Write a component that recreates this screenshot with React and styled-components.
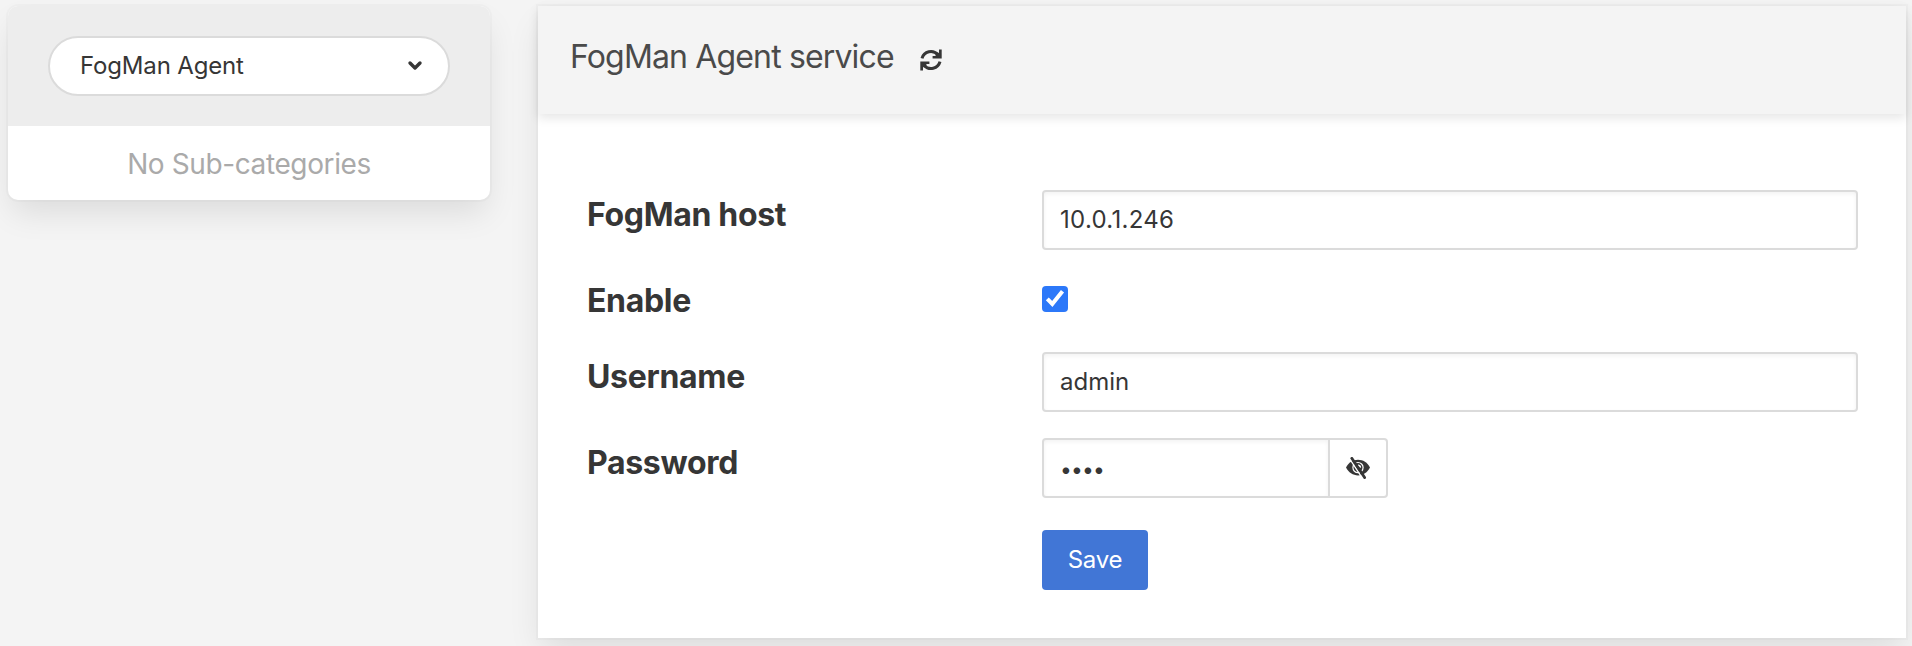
import React from 'react';
import styled, { createGlobalStyle } from 'styled-components';

const GlobalStyle = createGlobalStyle`
  *, *::before, *::after { box-sizing: border-box; }
  body {
    margin: 0;
    background: #f4f4f4;
    color: #363636;
    font-family: Inter, 'Liberation Sans', sans-serif;
    font-size: 24px;
    overflow: hidden;
  }
`;

const Page = styled.div`
  display: flex;
  align-items: flex-start;
  gap: 48px;
  height: 646px;
  padding: 6px 6px 0 8px;
  overflow: hidden;
`;

const Card = styled.section`
  background: #fff;
  box-shadow: 0 16px 32px -4px rgba(10, 10, 10, 0.1), 0 0 0 2px rgba(10, 10, 10, 0.02);
`;

const Sidebar = styled(Card)`
  width: 482px;
  height: 194px;
  border-radius: 10px;
  overflow: hidden;
`;

const SidebarHeader = styled.div`
  height: 120px;
  padding: 30px 40px;
  background: #ededed;
`;

const CategorySelect = styled.div`
  display: flex;
  align-items: center;
  justify-content: space-between;
  height: 60px;
  padding: 0 25px 2px 30px;
  border: 2px solid #dbdbdb;
  border-radius: 30px;
  background: #fff;
  letter-spacing: -0.16px;
`;

const EmptyNote = styled.p`
  margin: 0;
  height: 74px;
  line-height: 77px;
  text-align: center;
  font-size: 28px;
  letter-spacing: -0.39px;
  color: #aaa;
`;

const Main = styled(Card)`
  flex: 1;
  height: 632px;
`;

const MainHeader = styled.header`
  display: flex;
  align-items: flex-start;
  gap: 26px;
  height: 108px;
  padding: 27px 32px;
  background: #f4f4f4;
  box-shadow: 0 4px 10px rgba(10, 10, 10, 0.1);
`;

const Title = styled.h1`
  margin: 0;
  font-size: 32px;
  font-weight: 400;
  line-height: 48px;
  letter-spacing: -0.85px;
  color: #4a4a4a;
`;

const RefreshButton = styled.button`
  display: flex;
  margin: 16px 0 0;
  padding: 0;
  border: 0;
  background: none;
  color: #363636;
`;

const Form = styled.div`
  display: flex;
  flex-direction: column;
  gap: 26px;
  padding: 76px 48px 0;
`;

const Field = styled.div`
  display: grid;
  grid-template-columns: 456px 1fr;
  height: ${(p) => p.$height || 60}px;
`;

const Label = styled.label`
  padding-left: 1px;
  font-size: 32px;
  font-weight: 700;
  line-height: 50px;
  letter-spacing: -0.32px;
`;

const TextBox = styled.div`
  height: 60px;
  padding: 0 16px;
  border: 2px solid #dbdbdb;
  border-radius: 4px;
  background: #fff;
  box-shadow: inset 0 2px 4px rgba(10, 10, 10, 0.05);
  line-height: 55px;
  letter-spacing: ${(p) => p.$spacing || 0}px;
`;

const PasswordGroup = styled.div`
  display: flex;
`;

const PasswordBox = styled(TextBox)`
  width: 288px;
  border-radius: 4px 0 0 4px;
  font-size: 21px;
  line-height: 59px;
`;

const RevealButton = styled.button`
  display: flex;
  align-items: center;
  justify-content: center;
  width: 60px;
  height: 60px;
  margin-left: -2px;
  padding: 0;
  border: 2px solid #dbdbdb;
  border-radius: 0 4px 4px 0;
  background: #fff;
  color: #363636;
`;

const Checkbox = styled.span`
  display: block;
  width: 26px;
  height: 26px;
  margin-top: 10px;
  border-radius: 4px;
  background: #2c78f9;
`;

const Actions = styled.div`
  margin: 6px 0 0 456px;
`;

const SaveButton = styled.button`
  width: 106px;
  height: 60px;
  padding: 0 0 1px;
  border: 0;
  border-radius: 4px;
  background: #4176d6;
  color: #fff;
  font: inherit;
  letter-spacing: -0.25px;
`;

const Chevron = () => (
  <svg width="16" height="12" viewBox="0 0 16 12" fill="none" stroke="currentColor" strokeWidth="3.4" strokeLinecap="round" strokeLinejoin="round">
    <path d="M3 4 8 9 13 4" />
  </svg>
);

const RefreshIcon = () => (
  <svg width="22" height="22" viewBox="0 0 22 22">
    <g id="half">
      <path d="M2 9.3A9.2 9.2 0 0 1 17.8 5.6" fill="none" stroke="currentColor" strokeWidth="3" />
      <path d="M19 0.4H21.7V9.6H12.6V6.9H16L15.2 6L17.8 3.2L19 4.2Z" fill="currentColor" />
    </g>
    <use href="#half" transform="rotate(180 11 11)" />
  </svg>
);

const EyeSlashIcon = () => (
  <svg width="24" height="22" viewBox="0 0 24 22">
    <path d="M0 10.6C2.5 5.5 7 2.8 12 2.8S21.5 5.5 24 10.6C21.5 15.7 17 18.4 12 18.4S2.5 15.7 0 10.6Z" fill="currentColor" />
    <circle cx="12" cy="10.6" r="5.1" fill="currentColor" stroke="#fff" strokeWidth="1.2" />
    <path d="M12 8.2A2.2 2.2 0 0 1 14.3 10.6" fill="none" stroke="#fff" strokeWidth="1.6" />
    <path d="M3.9 2.1 16.9 22" stroke="#fff" strokeWidth="1.4" />
    <path d="M5.8 1.3 18.6 20.6" stroke="currentColor" strokeWidth="2.8" strokeLinecap="round" />
  </svg>
);

const CheckIcon = () => (
  <svg width="26" height="26" viewBox="0 0 26 26" fill="none" stroke="#fff" strokeWidth="4" display="block">
    <path d="M5.3 12.8 10.3 18 20.5 5.3" />
  </svg>
);

export default function App() {
  return (
    <>
      <GlobalStyle />
      <Page>
        <Sidebar>
          <SidebarHeader>
            <CategorySelect>
              FogMan Agent
              <Chevron />
            </CategorySelect>
          </SidebarHeader>
          <EmptyNote>No Sub-categories</EmptyNote>
        </Sidebar>
        <Main>
          <MainHeader>
            <Title>FogMan Agent service</Title>
            <RefreshButton aria-label="Refresh"><RefreshIcon /></RefreshButton>
          </MainHeader>
          <Form>
            <Field>
              <Label>FogMan host</Label>
              <TextBox $spacing={0.3}>10.0.1.246</TextBox>
            </Field>
            <Field $height={50}>
              <Label>Enable</Label>
              <Checkbox role="checkbox" aria-checked="true"><CheckIcon /></Checkbox>
            </Field>
            <Field>
              <Label>Username</Label>
              <TextBox>admin</TextBox>
            </Field>
            <Field>
              <Label>Password</Label>
              <PasswordGroup>
                <PasswordBox $spacing={-0.8}>••••</PasswordBox>
                <RevealButton aria-label="Show password"><EyeSlashIcon /></RevealButton>
              </PasswordGroup>
            </Field>
            <Actions>
              <SaveButton>Save</SaveButton>
            </Actions>
          </Form>
        </Main>
      </Page>
    </>
  );
}
